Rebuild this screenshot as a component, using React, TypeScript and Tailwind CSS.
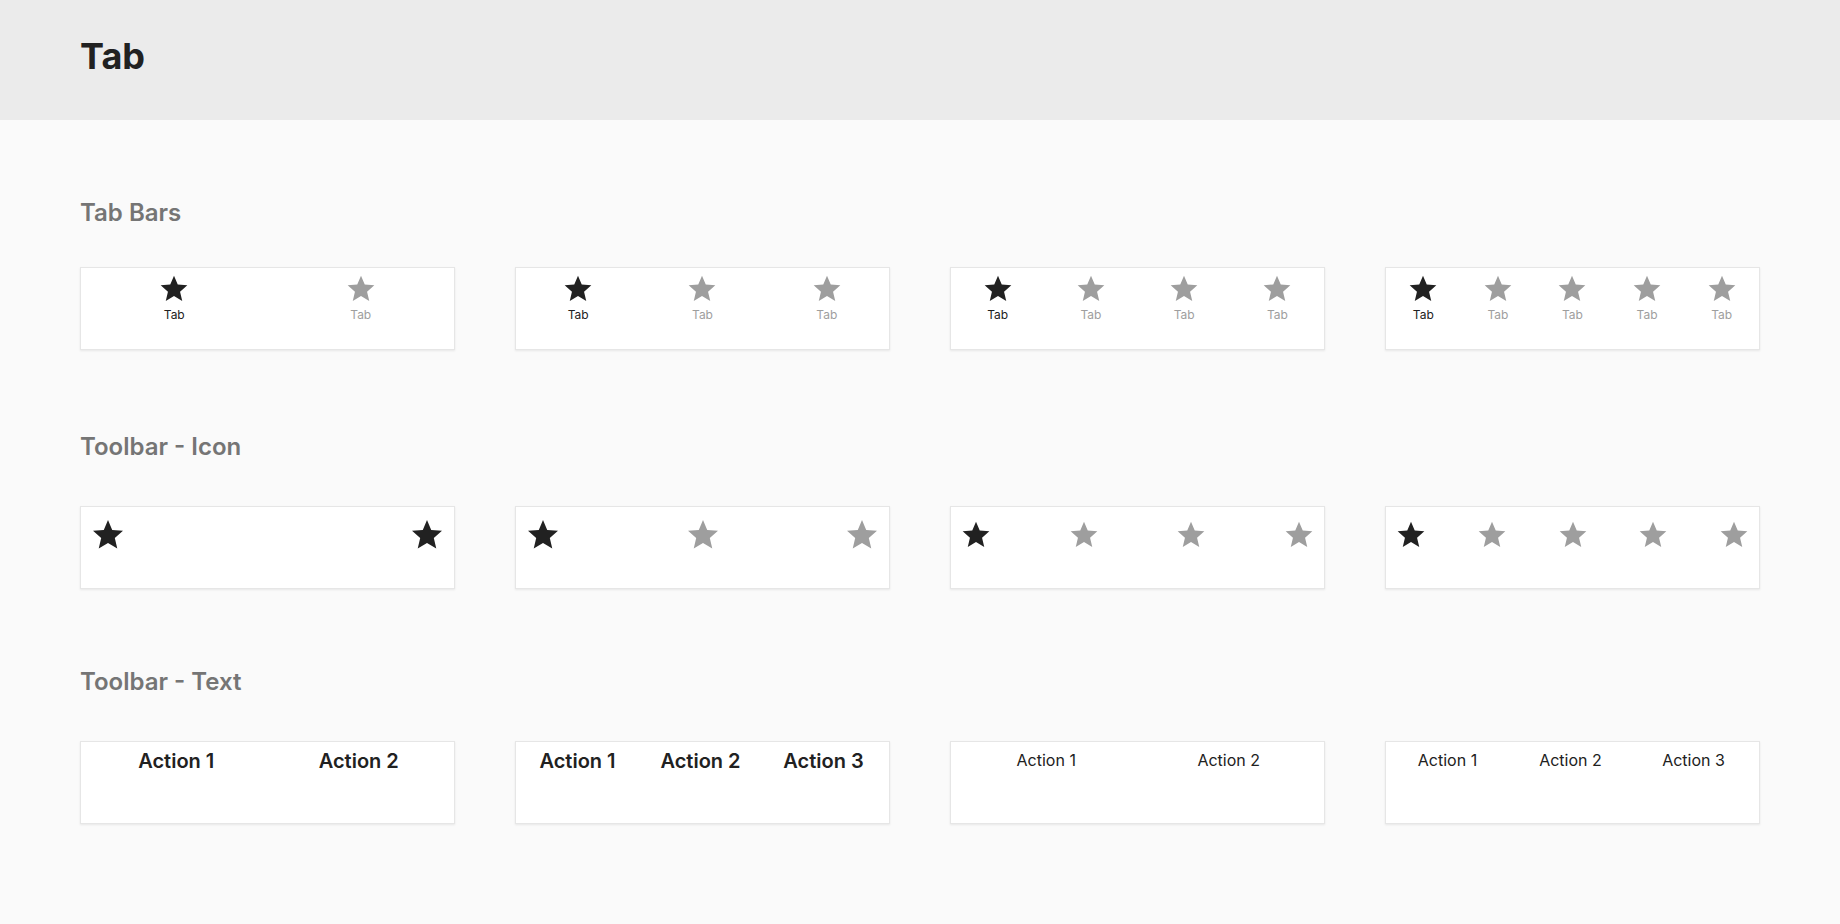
import React from "react";

const STAR =
  "M12 17.27L18.18 21l-1.64-7.03L22 9.24l-7.19-.61L12 2 9.19 8.63 2 9.24l5.46 4.73L5.82 21z";

function Star({ size, active }: { size: number; active: boolean }) {
  return (
    <svg
      width={size}
      height={size}
      viewBox="0 0 24 24"
      className={active ? "fill-[#212121] shrink-0" : "fill-[#9e9e9e] shrink-0"}
    >
      <path d={STAR} />
    </svg>
  );
}

function Card({ children, className = "" }: { children: React.ReactNode; className?: string }) {
  return (
    <div
      className={
        "w-[375px] h-[83px] bg-white border border-[#e6e6e6] shadow-[0_1px_2px_rgba(0,0,0,0.08)] " +
        className
      }
    >
      {children}
    </div>
  );
}

function TabBar({ n }: { n: number }) {
  return (
    <Card className="flex">
      {Array.from({ length: n }).map((_, i) => (
        <div key={i} className="flex-1 flex flex-col items-center pt-[5px]">
          <Star size={32} active={i === 0} />
          <span
            className={
              "mt-[2px] text-[12px] leading-[16px] " +
              (i === 0 ? "text-[#212121]" : "text-[#9e9e9e]")
            }
          >
            Tab
          </span>
        </div>
      ))}
    </Card>
  );
}

function IconBar({ n, size }: { n: number; size: number }) {
  return (
    <Card>
      <div className="h-14 flex items-center justify-between px-[9px]">
        {Array.from({ length: n }).map((_, i) => (
          <Star key={i} size={size} active={n === 2 ? true : i === 0} />
        ))}
      </div>
    </Card>
  );
}

function TextBar({ n, bold }: { n: number; bold: boolean }) {
  return (
    <Card>
      <div
        className={
          "flex " +
          (n === 3 ? "pl-0 pr-1 " : "px-1 ") +
          (bold ? "pt-[5px]" : "pt-[4px]")
        }
      >
        {Array.from({ length: n }).map((_, i) => (
          <div
            key={i}
            className={
              "flex-1 text-center text-[#212121] " +
              (bold ? "text-[20px] leading-[28px] font-semibold" : "text-[16px] leading-[28px]")
            }
          >
            Action {i + 1}
          </div>
        ))}
      </div>
    </Card>
  );
}

function Heading({ children, className = "" }: { children: React.ReactNode; className?: string }) {
  return (
    <h2 className={"text-[24px] leading-[32px] font-semibold text-[#757575] " + className}>
      {children}
    </h2>
  );
}

export default function App() {
  return (
    <div className="min-h-screen bg-[#fafafa] font-['Inter','Noto_Sans',sans-serif]">
      <header className="h-[120px] bg-[#ebebeb] px-20 pt-9">
        <h1 className="text-[36px] leading-[40px] font-bold text-[#212121]">Tab</h1>
      </header>
      <main className="px-20 pt-[77px] pb-10">
        <Heading className="mb-[38px]">Tab Bars</Heading>
        <div className="flex gap-[60px]">
          <TabBar n={2} />
          <TabBar n={3} />
          <TabBar n={4} />
          <TabBar n={5} />
        </div>

        <Heading className="mt-[81px] mb-[43px]">Toolbar - Icon</Heading>
        <div className="flex gap-[60px]">
          <IconBar n={2} size={36} />
          <IconBar n={3} size={36} />
          <IconBar n={4} size={32} />
          <IconBar n={5} size={32} />
        </div>

        <Heading className="mt-[77px] mb-[43px]">Toolbar - Text</Heading>
        <div className="flex gap-[60px]">
          <TextBar n={2} bold />
          <TextBar n={3} bold />
          <TextBar n={2} bold={false} />
          <TextBar n={3} bold={false} />
        </div>
      </main>
    </div>
  );
}
